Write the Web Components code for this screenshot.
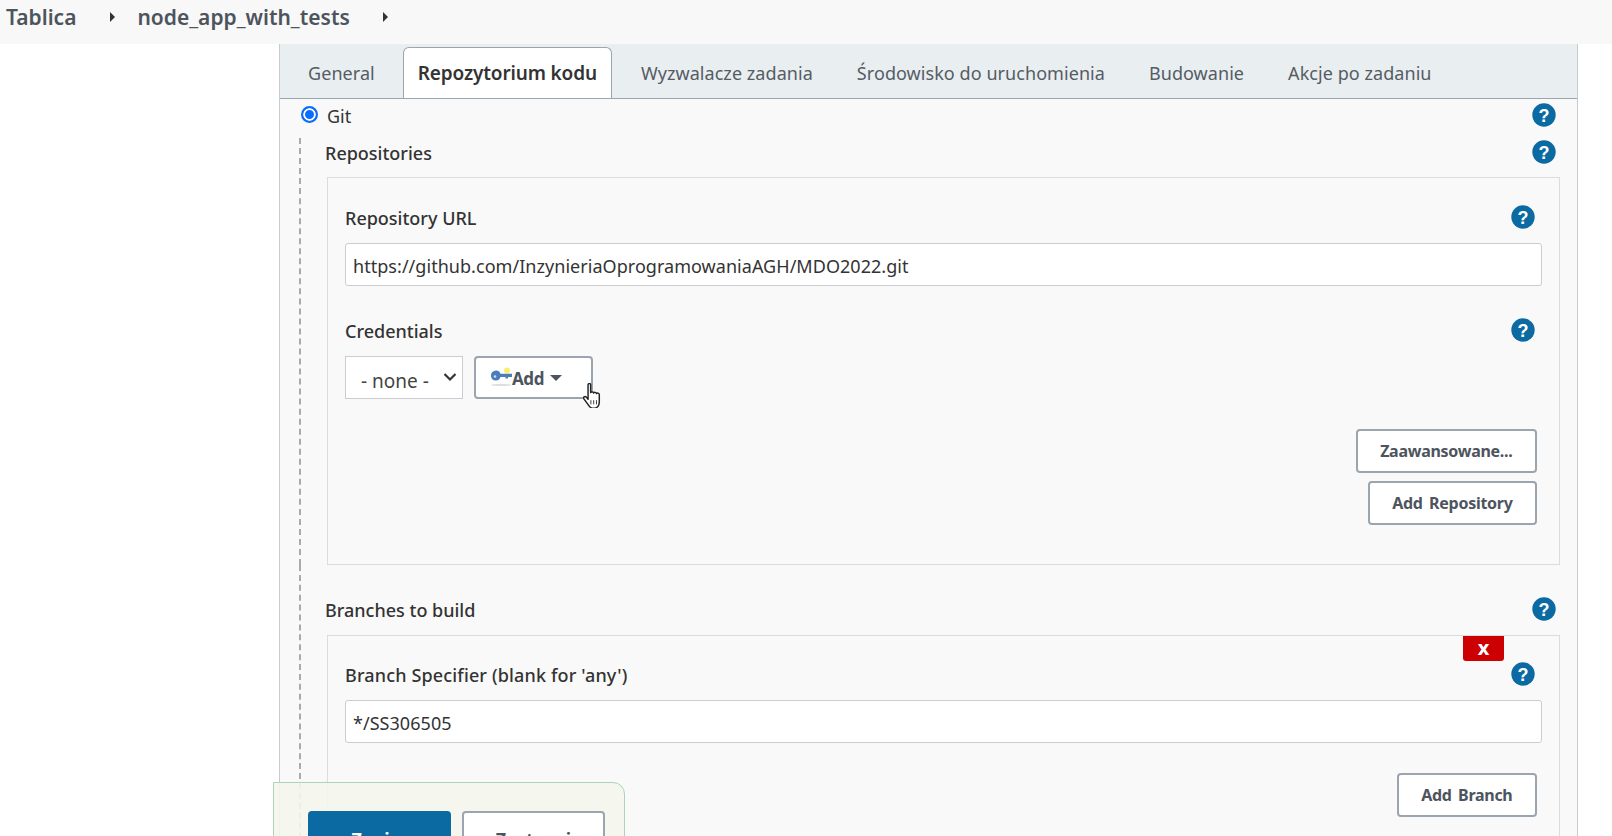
<!DOCTYPE html>
<html lang="pl">
<head>
<meta charset="utf-8">
<title>node_app_with_tests</title>
<style>
  html, body { margin: 0; height: 836px; overflow: hidden; background: #fff; }
  body { font-family: "Noto Sans", "Open Sans", sans-serif; color: #333; position: relative; }
</style>
</head>
<body>
<jk-breadcrumb>
  <a>Tablica</a>
  <a>node_app_with_tests</a>
</jk-breadcrumb>

<jk-panel>
  <jk-tabs slot="tabs" active="Repozytorium kodu"></jk-tabs>

  <jk-radio-row>Git</jk-radio-row>
  <jk-section title="Repositories" style="padding-top:1px">
    <jk-box style="padding-top:28px;padding-bottom:39px">
      <jk-field label="Repository URL">
        <jk-input>https://github.com/InzynieriaOprogramowaniaAGH/MDO2022.git</jk-input>
      </jk-field>
      <jk-field label="Credentials" style="margin-top:33px">
        <jk-credentials></jk-credentials>
      </jk-field>
      <jk-actions style="margin-top:30px">
        <jk-btn>Zaawansowane...</jk-btn>
        <jk-btn>Add Repository</jk-btn>
      </jk-actions>
    </jk-box>
  </jk-section>
  <jk-section title="Branches to build" style="padding-top:31px">
    <jk-box closable="true" style="margin-top:1px;padding-top:27px;padding-bottom:60px">
      <jk-field label="Branch Specifier (blank for 'any')" style="letter-spacing:.15px">
        <jk-input>*/SS306505</jk-input>
      </jk-field>
      <jk-actions style="margin-top:30px">
        <jk-btn>Add Branch</jk-btn>
      </jk-actions>
    </jk-box>
  </jk-section>
</jk-panel>

<jk-savebar></jk-savebar>

<script>
const helpIcon = `<svg class="help" style="position:relative;top:-1px;flex:none" width="24" height="24" viewBox="0 0 24 24"><circle cx="12" cy="12" r="11.7" fill="#0b6aa2"/><text x="12" y="18.500" text-anchor="middle" fill="#fff" font-family="'Liberation Sans', sans-serif" font-size="18" font-weight="700">?</text></svg>`;

class JkBreadcrumb extends HTMLElement {
  constructor() {
    super();
    this.attachShadow({ mode: "open" });
    this.shadowRoot.innerHTML = `
      <style>
        :host { display: flex; align-items: center; height: 44px; background: #f8f8f8; padding: 0 0 10px 6px; box-sizing: border-box; font-size: 21px; font-weight: 600; color: #4d545d; }
        ::slotted(a) { display: block; }
      </style>
      <slot></slot>`;
    // a caret follows every crumb
    const gaps = [[34, 22], [33, 0]];
    [...this.children].forEach((a, i) => {
      const sep = document.createElement("span");
      sep.style.cssText = `width:0;height:0;border-left:5px solid #333;border-top:5px solid transparent;border-bottom:5px solid transparent;margin:0 ${gaps[i][1]}px 0 ${gaps[i][0]}px`;
      a.after(sep);
    });
  }
}

class JkPanel extends HTMLElement {
  constructor() {
    super();
    this.attachShadow({ mode: "open" });
    this.shadowRoot.innerHTML = `
      <style>
        :host { display: block; width: 1299px; margin-left: 279px; height: 792px; box-sizing: border-box; border-left: 1px solid #c8ccd0; border-right: 1px solid #c8ccd0; background: #f9f9f9; overflow: hidden; }
        .body { padding: 0 21px 0 0; }
      </style>
      <slot name="tabs"></slot>
      <div class="body"><slot></slot></div>`;
  }
}

class JkTabs extends HTMLElement {
  constructor() {
    super();
    this.attachShadow({ mode: "open" });
    const names = ["General", "Repozytorium kodu", "Wyzwalacze zadania", "Środowisko do uruchomienia", "Budowanie", "Akcje po zadaniu"];
    const active = this.getAttribute("active");
    const items = names.map(n => `<div class="tab${n === active ? " on" : ""}">${n}</div>`).join("");
    this.shadowRoot.innerHTML = `
      <style>
        :host { display: flex; align-items: flex-end; height: 55px; box-sizing: border-box; background: #e9eef1; border-bottom: 1px solid #9aa5af; padding-left: 6px; font-size: 18px; color: #555c64; letter-spacing: .06px; }
        .tab { height: 51px; display: flex; align-items: center; padding: 0 22px 2px; margin-bottom: -1px; box-sizing: border-box; white-space: nowrap; }
        .on { background: #fff; border: 1px solid #9aa5af; border-bottom: 0; border-radius: 6px 6px 0 0; font-size: 19px; font-weight: 600; letter-spacing: -.15px; color: #333; margin: 0 7px 0 6px; padding: 0 14px; }
      </style>${items}`;
  }
}

class JkRadioRow extends HTMLElement {
  constructor() {
    super();
    this.attachShadow({ mode: "open" });
    this.shadowRoot.innerHTML = `
      <style>
        :host { display: flex; align-items: center; height: 39px; padding: 0 0 5px 21px; font-size: 18px; box-sizing: border-box; }
        .r { width: 17px; height: 17px; box-sizing: border-box; border: 2px solid #0a6cff; border-radius: 50%; background: #0a6cff; box-shadow: inset 0 0 0 2px #fff; margin-right: 9px; position: relative; top: -2px; }
        .h { margin-left: auto; line-height: 0; }
      </style>
      <span class="r"></span><span><slot></slot></span><span class="h">${helpIcon}</span>`;
  }
}

class JkSection extends HTMLElement {
  constructor() {
    super();
    this.attachShadow({ mode: "open" });
    this.shadowRoot.innerHTML = `
      <style>
        :host { display: block; margin-left: 19px; padding-left: 24px; border-left: 2px dashed #aaa; }
        .head { display: flex; align-items: center; justify-content: space-between; height: 38px; padding-bottom: 10px; box-sizing: border-box; font-size: 18px; font-weight: 500; color: #333; }
      </style>
      <div class="head"><span>${this.getAttribute("title")}</span>${helpIcon}</div>
      <slot></slot>`;
  }
}

class JkBox extends HTMLElement {
  constructor() {
    super();
    this.attachShadow({ mode: "open" });
    const close = this.hasAttribute("closable") ? `<div class="x">x</div>` : "";
    this.shadowRoot.innerHTML = `
      <style>
        :host { display: block; position: relative; margin-left: 2px; border: 1px solid #dcdcdc; padding: 28px 17px 0; width: 1233px; box-sizing: border-box; }
        .x { position: absolute; top: 0; right: 55px; width: 41px; height: 25px; background: #cc0003; color: #fff; border-radius: 0 0 3px 3px; font: 700 20px/23px "Noto Sans", sans-serif; text-align: center; }
      </style>${close}<slot></slot>`;
  }
}

class JkField extends HTMLElement {
  constructor() {
    super();
    this.attachShadow({ mode: "open" });
    this.shadowRoot.innerHTML = `
      <style>
        :host { display: block; }
        .l { display: flex; align-items: center; justify-content: space-between; height: 24px; font-size: 18px; font-weight: 500; color: #333; margin-bottom: 13px; padding-right: 7px; }
      </style>
      <div class="l"><span>${this.getAttribute("label")}</span>${helpIcon}</div>
      <slot></slot>`;
  }
}

class JkInput extends HTMLElement {
  constructor() {
    super();
    this.attachShadow({ mode: "open" });
    this.shadowRoot.innerHTML = `
      <style>
        :host { display: flex; align-items: center; height: 43px; box-sizing: border-box; border: 1px solid #c9cdd1; border-radius: 3px; background: #fff; padding: 3px 0 0 7px; font-size: 18px; color: #333; letter-spacing: .04px; }
      </style><slot></slot>`;
  }
}

class JkCredentials extends HTMLElement {
  constructor() {
    super();
    this.attachShadow({ mode: "open" });
    this.shadowRoot.innerHTML = `
      <style>
        :host { display: flex; align-items: flex-start; position: relative; height: 43px; }
        .sel { width: 118px; height: 43px; box-sizing: border-box; border: 1px solid #c9cdd1; background: #fff; display: flex; align-items: center; padding: 6px 0 0 15px; font-size: 19px; color: #444; position: relative; }
        .sel svg { position: absolute; right: 5px; top: 15px; }
        .add { margin-left: 11px; width: 119px; height: 43px; box-sizing: border-box; border: 2px solid #9aa5af; border-radius: 4px; background: #fff; display: flex; align-items: center; padding: 2px 0 0 15px; font-size: 17px; font-weight: 700; color: #4d545d; letter-spacing: -.4px; }
        .key { flex: none; margin: -3px 0 0 0; }
        .car { width: 0; height: 0; border-top: 6px solid #4d545d; border-left: 6px solid transparent; border-right: 6px solid transparent; margin-left: 6px; margin-top: -2px; }
        .hand { position: absolute; left: 238px; top: 27px; }
      </style>
      <div class="sel">- none -<svg width="14" height="10" viewBox="0 0 14 10"><path d="M1.500 2 7 7.500 12.500 2" fill="none" stroke="#333" stroke-width="2.200"/></svg></div>
      <div class="add">
        <svg class="key" width="21" height="20" viewBox="0 0 21 20"><ellipse cx="10" cy="18" rx="10" ry="1" fill="#dcdcdc"/><circle cx="16" cy="3.500" r="3" fill="#f7f06a"/><path d="M0 9.500a5 5.500 0 0 1 9.500-2.800H21v3.300h-4v1.500h-2.500V10H9.500A5 5.500 0 0 1 0 9.500z" fill="#4a7dba"/><circle cx="4" cy="9.500" r="1.300" fill="#cfe0f2"/></svg>
        <span>Add</span><span class="car"></span>
      </div>
      <svg class="hand" width="18" height="25" viewBox="0.500 0.500 16 24" preserveAspectRatio="none"><path d="M5 2.200c0-1.600 2.300-1.600 2.300 0v7.600c.4-1 2.300-1 2.600.3.400-1 2.300-.9 2.600.5.500-.8 2.400-.6 2.500 1.100v6.300c0 3.400-1.800 6-3.600 6.600H8.300c-1.600-.6-2.400-1.800-3.100-3.100L1.300 15.800c-1.100-1.800 1-3 2.200-1.700L5 16.200z" fill="#fff" stroke="#222" stroke-width="1.300" stroke-linejoin="round"/><path d="M7.500 17v4M10 17v4M12.500 17v4" stroke="#222" stroke-width=".8"/></svg>`;
  }
}

class JkActions extends HTMLElement {
  constructor() {
    super();
    this.attachShadow({ mode: "open" });
    this.shadowRoot.innerHTML = `
      <style>
        :host { display: flex; flex-direction: column; align-items: flex-end; gap: 8px; padding-right: 5px; }
      </style><slot></slot>`;
  }
}

class JkBtn extends HTMLElement {
  constructor() {
    super();
    this.attachShadow({ mode: "open" });
    this.shadowRoot.innerHTML = `
      <style>
        :host { display: flex; align-items: center; height: 44px; box-sizing: border-box; border: 2px solid #9aa5af; border-radius: 4px; background: #fff; padding: 0 22.500px; font-size: 16px; font-weight: 700; color: #4d545d; letter-spacing: -.28px; word-spacing: 2.500px; white-space: nowrap; }
      </style><slot></slot>`;
  }
}

class JkSavebar extends HTMLElement {
  constructor() {
    super();
    this.attachShadow({ mode: "open" });
    this.shadowRoot.innerHTML = `
      <style>
        :host { position: absolute; left: 273px; top: 782px; width: 352px; height: 70px; box-sizing: border-box; border: 1px solid #aed2bb; border-radius: 0 12px 0 0; background: rgba(244,246,236,.9); display: flex; gap: 11px; padding: 28px 0 0 34px; font-size: 18px; font-weight: 700; }
        div { height: 60px; width: 143px; box-sizing: border-box; border-radius: 4px; text-align: center; line-height: 56px; flex: none; }
        .s { background: #0b6aa2; color: #fff; }
        .c { background: #fff; border: 2px solid #9aa5af; color: #4d545d; line-height: 52px; }
      </style>
      <div class="s">Zapisz</div><div class="c">Zastosuj</div>`;
  }
}

customElements.define("jk-breadcrumb", JkBreadcrumb);
customElements.define("jk-panel", JkPanel);
customElements.define("jk-tabs", JkTabs);
customElements.define("jk-radio-row", JkRadioRow);
customElements.define("jk-section", JkSection);
customElements.define("jk-box", JkBox);
customElements.define("jk-field", JkField);
customElements.define("jk-input", JkInput);
customElements.define("jk-credentials", JkCredentials);
customElements.define("jk-actions", JkActions);
customElements.define("jk-btn", JkBtn);
customElements.define("jk-savebar", JkSavebar);
</script>
</body>
</html>
